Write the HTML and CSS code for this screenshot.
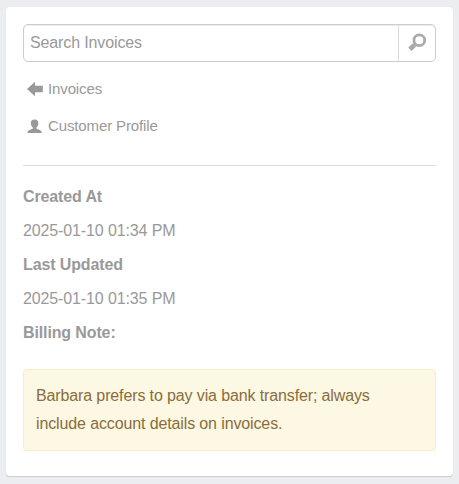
FILE: index.html
```
<!DOCTYPE html>
<html lang="en">

<head>
    <meta charset="UTF-8">
    <meta name="viewport" content="width=device-width, initial-scale=1.0">
    <title>Invoices</title>
    <link rel="stylesheet" href="styles.css">
</head>

<body>
    <aside class="panel">

        <form class="search">
            <input type="text" class="search-input" placeholder="Search Invoices">
            <button type="button" class="search-button" aria-label="Search">
                <svg width="20" height="20" viewBox="0 0 20 20">
                    <circle cx="12.3" cy="7.2" r="5.4" fill="none" stroke="#aaa" stroke-width="2.8" />
                    <path d="M8.4 11.2L7.2 12.400" stroke="#aaa" stroke-width="3" />
                    <path d="M7.400 12.100L2.900 16.200" stroke="#aaa" stroke-width="4.800" />
                </svg>
            </button>
        </form>

        <nav>
            <a class="nav-link">
                <svg width="16" height="16" viewBox="0 0 16 16">
                    <path d="M0 8L8 .8V4.800H15.800V11.300H8V15.300Z" />
                </svg>
                Invoices
            </a>
            <a class="nav-link">
                <svg width="16" height="16" viewBox="0 0 16 16">
                    <path d="M7.600 1.600C10 1.600 11.400 3 11.400 5C11.400 7 10.600 8.600 9.500 9.600V10.800C11.400 11.700 14.700 12 14.900 15H.4C.6 12 3.900 11.700 5.800 10.800V9.600C4.700 8.600 3.800 7 3.800 5C3.800 3 5.200 1.600 7.600 1.600Z" />
                </svg>
                Customer Profile
            </a>
        </nav>

        <hr>

        <section class="details">
            <p><strong>Created At</strong></p>
            <p>2025-01-10 01:34 PM</p>
            <p><strong>Last Updated</strong></p>
            <p>2025-01-10 01:35 PM</p>
            <p><strong>Billing Note:</strong></p>
        </section>

        <div class="note">Barbara prefers to pay via bank transfer; always include account details on invoices.</div>

    </aside>
</body>

</html>
```
FILE: styles.css
```
* {
    box-sizing: border-box;
}

body {
    margin: 0;
    padding: 7px 6px 8px;
    background: #ecedf1;
    font-family: "Liberation Sans", Arial, sans-serif;
    font-size: 16px;
    letter-spacing: -.125px;
    color: #999;
}

.panel {
    height: 469px;
    padding: 17px;
    background: #fff;
    border-radius: 4px;
    box-shadow: 0 1px 1px rgba(0, 0, 0, .15);
}

.search {
    display: flex;
    height: 38px;
    border: 1px solid #ccc;
    border-radius: 5px;
    box-shadow: inset 0 1px 1px rgba(0, 0, 0, .075);
}

.search-input {
    flex: 1;
    min-width: 0;
    padding: 0 6px;
    border: 0;
    background: none;
    font: inherit;
    letter-spacing: inherit;
}

.search-input::placeholder {
    color: #999;
}

.search-button {
    width: 37px;
    padding: 0;
    border: 0;
    border-left: 1px solid #ddd;
    background: none;
}

.search-button svg {
    display: block;
    margin: 0 8px;
}

nav {
    padding-top: 8px;
}

.nav-link {
    display: flex;
    align-items: center;
    gap: 5px;
    height: 37px;
    padding-left: 4px;
    font-size: 15px;
}

.nav-link svg {
    fill: #999;
}

hr {
    height: 1px;
    margin: 21px 0 14px;
    border: 0;
    background: #ddd;
}

.details p {
    margin: 0;
    line-height: 34px;
}

.note {
    margin-top: 19px;
    padding: 12px;
    border: 1px solid #faebcc;
    border-radius: 4px;
    background: #fcf8e3;
    color: #8a6d3b;
    line-height: 28px;
}
```
